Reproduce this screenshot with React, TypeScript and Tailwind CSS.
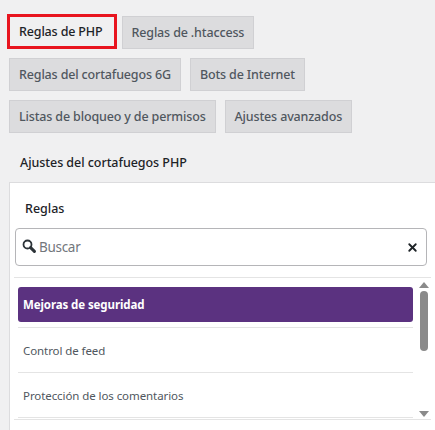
import { X } from 'lucide-react';

const font = "font-['Noto_Sans',_sans-serif]";

function Tab({ label, active = false }: { label: string; active?: boolean }) {
  if (active) {
    return (
      <div className="h-[35px] border-[3px] border-[#e8141f] bg-[#f0f0f1] pl-[9px] pr-[11px] pt-px flex items-center text-[12.5px] font-medium tracking-[-0.15px] text-[#1d2327] -ml-[2px] -mt-[2px] whitespace-nowrap">
        {label}
      </div>
    );
  }
  return (
    <div className="h-[33px] border border-[#d0d0d3] bg-[#dcdcde] px-[9px] pt-px flex items-center text-[12.5px] font-medium tracking-[-0.15px] text-[#50575e] whitespace-nowrap">
      {label}
    </div>
  );
}

function Row({ label }: { label: string }) {
  return (
    <div className="h-[45px] pl-[5px] pt-[2px] flex items-center text-[11.5px] tracking-[-0.08px] text-[#50575e] border-b border-[#e4e4e4]">
      {label}
    </div>
  );
}

export default function App() {
  return (
    <div className={`${font} w-[435px] h-[430px] overflow-hidden bg-[#f0f0f1] pt-4 pl-[9px]`}>
      <div className="flex flex-col gap-[9px]">
        <div className="flex gap-[5px] items-end">
          <Tab label="Reglas de PHP" active />
          <Tab label="Reglas de .htaccess" />
        </div>
        <div className="flex gap-[9px]">
          <Tab label="Reglas del cortafuegos 6G" />
          <Tab label="Bots de Internet" />
        </div>
        <div className="flex gap-[9px]">
          <Tab label="Listas de bloqueo y de permisos" />
          <Tab label="Ajustes avanzados" />
        </div>
      </div>

      <div className="mt-[20px] pl-[11px] pt-px h-[20px] flex items-center text-[12.5px] font-medium tracking-[-0.05px] text-[#1d2327]">
        Ajustes del cortafuegos PHP
      </div>

      <div className="mt-[9px] h-[300px] bg-white border-t border-l border-[#dcdcde]">
        <div className="pl-[15px] pt-[17px] h-[45px] text-[12.5px] font-medium text-[#1d2327] leading-[18px]">
          Reglas
        </div>
        <div className="ml-[5px] w-[412px] h-[38px] border border-[#b5b5b8] rounded-[4px] flex items-center pl-[6px] pr-[7px]">
          <svg width="14" height="14" viewBox="0 0 14 14" fill="none" className="text-[#2c3338] shrink-0 -mt-[2px]">
            <circle cx="5.5" cy="5.5" r="4" stroke="currentColor" strokeWidth="1.8" />
            <path d="M8.6 8.6L12.4 12.4" stroke="currentColor" strokeWidth="3" strokeLinecap="round" />
          </svg>
          <span className="ml-[3px] flex-1 pt-px text-[13.5px] tracking-[-0.3px] text-[#72777c]">Buscar</span>
          <X size={13} strokeWidth={3.4} className="text-[#1d2327] shrink-0" />
        </div>

        <div className="ml-[4px] w-[417px] mt-[11px] border-t border-[#e4e4e4] flex">
          <div className="w-[399px] pl-[4px] pt-[9px]">
            <div className="w-[395px] h-[35px] rounded-[3px] bg-[#5b3280] pl-[5px] pt-px flex items-center text-[11.5px] font-bold tracking-[-0.1px] text-white">
              Mejoras de seguridad
            </div>
            <div className="h-[6px] border-b border-[#e4e4e4]" />
            <Row label="Control de feed" />
            <Row label="Protección de los comentarios" />
          </div>
          <div className="flex-1 flex flex-col items-center pl-[3px] pt-[4px]">
            <svg width="10" height="6" viewBox="0 0 10 6" className="text-[#8a8a8a] fill-current">
              <path d="M5 0l5 6H0z" />
            </svg>
            <div className="w-2 h-[60px] mt-[3px] rounded-full bg-[#8a8a8a]" />
            <svg width="10" height="6" viewBox="0 0 10 6" className="mt-[60px] text-[#8a8a8a] fill-current">
              <path d="M0 0h10L5 6z" />
            </svg>
          </div>
        </div>
        <div className="ml-[4px] w-[417px] mt-[1px] border-t border-[#e4e4e4]" />
      </div>
    </div>
  );
}
